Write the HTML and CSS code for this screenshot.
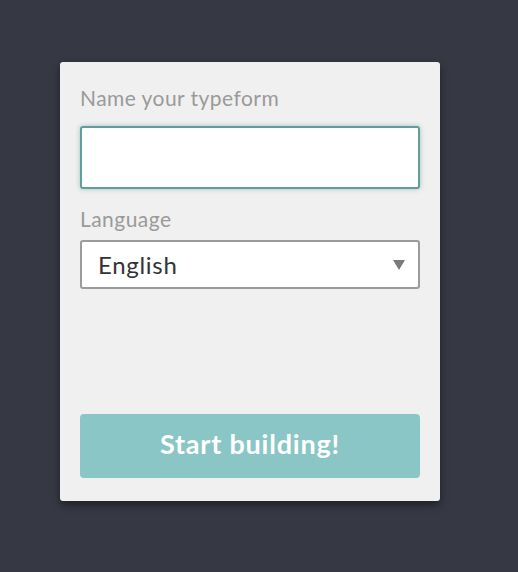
FILE: index.html
```html
<!DOCTYPE html>
<html lang="en">
<head>
  <meta charset="UTF-8" />
  <title>Create a typeform</title>
  <link rel="stylesheet" href="styles.css">
</head>
<body>
  <div class="card">
    <label class="field-label" for="formName">Name your typeform</label>
    <input type="text" id="formName" class="name-input" />

    <label class="field-label lang-label" for="language">Language</label>
    <div class="select-wrap">
      <select id="language" class="lang-select">
        <option value="en" selected>English</option>
        <option value="es">Español</option>
        <option value="fr">Français</option>
        <option value="de">Deutsch</option>
      </select>
      <span class="select-arrow"></span>
    </div>

    <button class="start-btn">Start building!</button>
  </div>
</body>
</html>
```

FILE: styles.css
```css
html, body {
  margin: 0;
  padding: 0;
  height: 100%;
  background: #363844;
  font-family: 'Lato', 'Noto Sans', sans-serif;
}

body {
  padding: 62px 0 0 60px;
  box-sizing: border-box;
}

.card {
  width: 380px;
  height: 439px;
  box-sizing: border-box;
  padding: 22px 20px 23px;
  background: #f0f0f0;
  border-radius: 3px;
  box-shadow: 0 4px 8px rgba(0, 0, 0, 0.45);
  display: flex;
  flex-direction: column;
}

.field-label {
  display: block;
  font-size: 21px;
  line-height: 28px;
  letter-spacing: 0.45px;
  color: #9a9a9a;
  margin-bottom: 14px;
}

.lang-label {
  margin-top: 16px;
  margin-bottom: 7px;
}

.name-input {
  height: 63px;
  width: 100%;
  box-sizing: border-box;
  border: 2px solid #639c9a;
  border-radius: 3px;
  background: #fff;
  box-shadow: 0 0 5px rgba(99, 156, 154, 0.55);
  outline: none;
  font-size: 20px;
  padding: 0 16px;
}

.select-wrap {
  position: relative;
}

.lang-select {
  -webkit-appearance: none;
  appearance: none;
  width: 100%;
  height: 49px;
  box-sizing: border-box;
  border: 2px solid #9b9b9b;
  border-radius: 3px;
  background: #fff;
  font-family: 'Lato', 'Noto Sans', sans-serif;
  font-size: 24px;
  letter-spacing: 0.7px;
  color: #333;
  padding: 0 16px;
  outline: none;
}

.select-arrow {
  position: absolute;
  right: 15px;
  top: 20px;
  width: 0;
  height: 0;
  border-left: 6px solid transparent;
  border-right: 6px solid transparent;
  border-top: 10px solid #7a7a7a;
  pointer-events: none;
}

.start-btn {
  margin-top: auto;
  height: 64px;
  width: 100%;
  padding: 0 0 5px;
  border: none;
  border-radius: 4px;
  background: #8ac6c5;
  color: #fff;
  font-family: 'Lato', 'Noto Sans', sans-serif;
  font-size: 27px;
  letter-spacing: 0.8px;
  font-weight: 700;
  cursor: pointer;
}
```
